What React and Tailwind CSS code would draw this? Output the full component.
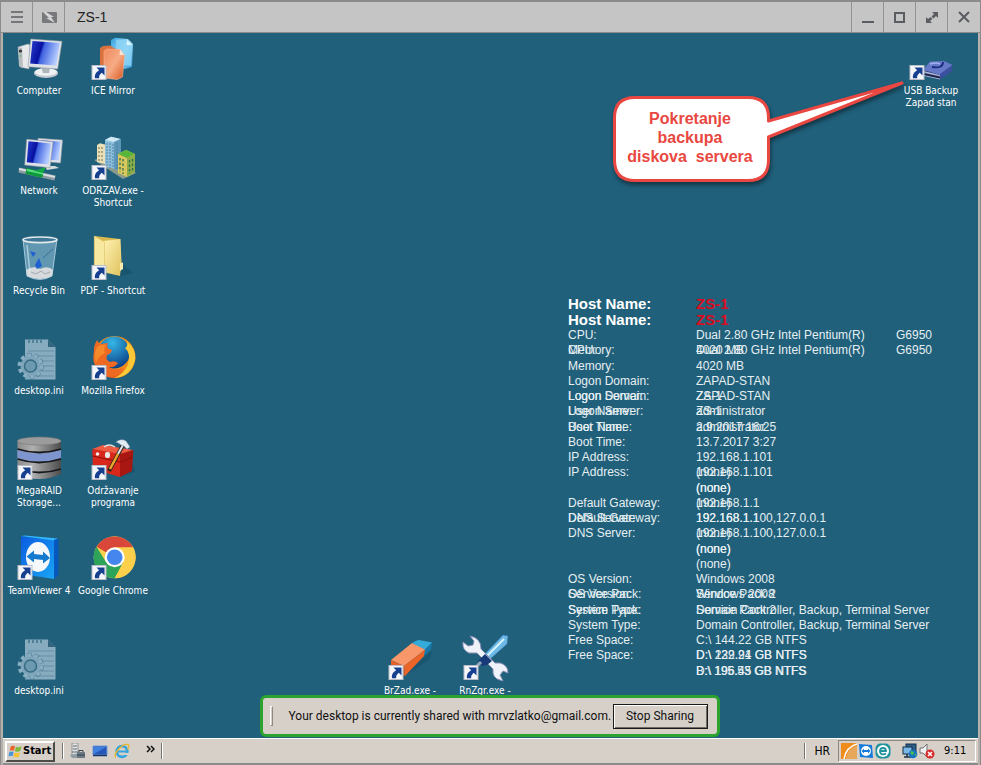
import React from "react";

const SANS = "font-['Liberation_Sans',Arial,sans-serif]";
const TAHOMA = "font-['DejaVu_Sans_Condensed','DejaVu_Sans',Tahoma,sans-serif]";

function Arrow() {
  return (
    <g>
      <rect x="3" y="29.500" width="14" height="14" fill="#f4f6fa" stroke="#b9bec8" strokeWidth="1" />
      <path d="M7.500 31.500 L15.500 31.500 L15.500 39.500 L12.800 36.800 C10.800 38.200 9.800 40 10.200 42.300 L6 42.300 C5.400 38.400 7.200 35.800 10.200 34.200 Z" fill="#173f8f" />
    </g>
  );
}

function Defs() {
  return (
    <svg className="absolute size-0" aria-hidden="true">
      <defs>
        <linearGradient id="screen" x1="0" y1="0" x2="1" y2="0.25">
          <stop offset="0" stopColor="#2a3fd0" />
          <stop offset="0.42" stopColor="#0610a0" />
          <stop offset="0.5" stopColor="#3f62e0" />
          <stop offset="1" stopColor="#b5ccff" />
        </linearGradient>
        <linearGradient id="metal" x1="0" y1="0" x2="1" y2="0">
          <stop offset="0" stopColor="#8b8b8b" />
          <stop offset="0.35" stopColor="#b0b0b0" />
          <stop offset="1" stopColor="#4c4c4c" />
        </linearGradient>
        <linearGradient id="orange" x1="0" y1="0" x2="1" y2="1">
          <stop offset="0" stopColor="#f08a5c" />
          <stop offset="0.5" stopColor="#f7ab85" />
          <stop offset="1" stopColor="#d9551d" />
        </linearGradient>
        <linearGradient id="sky" x1="0" y1="0" x2="1" y2="1">
          <stop offset="0" stopColor="#2f9fdc" />
          <stop offset="0.5" stopColor="#a8e0fa" />
          <stop offset="1" stopColor="#2a93d4" />
        </linearGradient>
        <linearGradient id="folder" x1="0" y1="0" x2="1" y2="1">
          <stop offset="0" stopColor="#fff3b4" />
          <stop offset="1" stopColor="#e0c25e" />
        </linearGradient>
        <linearGradient id="tv" x1="0" y1="0" x2="1" y2="1">
          <stop offset="0" stopColor="#0a5ce0" />
          <stop offset="1" stopColor="#19a5f5" />
        </linearGradient>
        <radialGradient id="fox" cx="0.5" cy="0.4" r="0.6">
          <stop offset="0.55" stopColor="#f9a01b" />
          <stop offset="1" stopColor="#e4541c" />
        </radialGradient>
        <radialGradient id="globe" cx="0.45" cy="0.2" r="0.8">
          <stop offset="0" stopColor="#35b6e6" />
          <stop offset="1" stopColor="#0b3f86" />
        </radialGradient>
      </defs>
    </svg>
  );
}

const art = {
  computer: (
    <g>
      <path d="M3 11 L13 8 L15 9 L14 33 L5 31 Z" fill="#e6e8ea" stroke="#9aa2a8" strokeWidth="0.500" />
      <path d="M3 11 L7 12 L8 32 L4 30 Z" fill="#b8bdc0" />
      <circle cx="5.500" cy="15" r="1.600" fill="#333" />
      <circle cx="5.500" cy="20" r="0.800" fill="#4fc04f" />
      <ellipse cx="31" cy="37" rx="12" ry="5" fill="#c4cbd0" />
      <ellipse cx="31" cy="36" rx="11" ry="3.800" fill="#eef1f3" />
      <path d="M26 31 L35 32 L34 37 L28 37 Z" fill="#aeb6bc" />
      <path d="M15.700 3 L47 5.300 L42.700 33 L13 30.700 Z" fill="#dfe3e8" stroke="#929aa5" strokeWidth="0.600" />
      <path d="M17.500 5 L44.800 7 L41.200 29.500 L15.200 27.500 Z" fill="url(#screen)" />
    </g>
  ),
  network: (
    <g>
      <path d="M23 2.300 L47.500 4 L45.500 27 L24 25 Z" fill="#dfe3e8" stroke="#929aa5" strokeWidth="0.600" />
      <path d="M25 4.300 L45.500 5.800 L43.800 24.500 L25 23 Z" fill="url(#screen)" />
      <path d="M30 30 h10 l4 2 l-12 2 z" fill="#d5dade" />
      <path d="M4 34 L40 42" stroke="#8f9ba3" strokeWidth="5" />
      <path d="M4 33 L40 41" stroke="#d7dde1" strokeWidth="2" />
      <path d="M11 35 L28 38.800" stroke="#0c9a3a" strokeWidth="6" />
      <path d="M12 34 L28 37.500" stroke="#5ee082" strokeWidth="2" />
      <path d="M19 35 L31 31 L28 37 Z" fill="#12a844" />
      <path d="M11.700 3.300 L38 5.700 L35 31.700 L9.700 29 Z" fill="#dfe3e8" stroke="#929aa5" strokeWidth="0.600" />
      <path d="M13.500 5.200 L36 7.400 L33.500 28.500 L11.800 26.200 Z" fill="url(#screen)" />
    </g>
  ),
  bin: (
    <g>
      <path d="M8 3 L12 40 Q25 47 37 40 L42 3 Z" fill="#8dbdd6" fillOpacity="0.600" stroke="#bcdceb" strokeWidth="0.800" />
      <path d="M11 34 Q18 29 25 33 Q33 29 38 34 L37 40 Q25 46 12 40 Z" fill="#d7dadd" />
      <path d="M16 36 l5 2 l5 -3 l4 3 l5 -2" stroke="#a4aab0" strokeWidth="1" fill="none" />
      <path d="M20 29 l4 -7 l3 8 l-5 3 z M15 15 l6 2 l-3 4 z" fill="#1f5fd0" />
      <path d="M28 22 L38 13" stroke="#356f96" strokeWidth="1" />
      <path d="M12 9 L15 37" stroke="#d6ecf6" strokeWidth="1.500" opacity="0.600" />
      <ellipse cx="25" cy="3.800" rx="17" ry="2.800" fill="#3d7795" stroke="#e2e8ec" strokeWidth="1.600" />
    </g>
  ),
  ini: (
    <g>
      <path d="M10 3.500 H33 L40.500 11 V43.500 H10 Z" fill="#87acc0" />
      <path d="M33 3.500 V11 H40.500 Z" fill="#31647d" />
      <path d="M14 4 v3 M18 4 v3 M22 4 v3 M26 4 v3" stroke="#31647d" strokeWidth="1.200" />
      <path d="M13 15 H39 M13 20 H39 M13 25 H39 M13 30 H39 M13 35 H39 M13 40 H39" stroke="#648fa6" strokeWidth="1" />
      <circle cx="15.500" cy="30" r="11" fill="none" stroke="#41738c" strokeWidth="4.500" strokeDasharray="4 2.910" />
      <circle cx="15.500" cy="30" r="10" fill="#7da4b9" />
      <circle cx="15.500" cy="30" r="11" fill="none" stroke="#8ab0c3" strokeWidth="3.500" strokeDasharray="3.600 3.310" />
      <circle cx="15.500" cy="30" r="6" fill="#6b99b0" stroke="#376b84" strokeWidth="1.500" />
    </g>
  ),
  raid: (
    <g>
      <path d="M2.500 5 V38 Q24 48 46 38 V5 Z" fill="url(#metal)" />
      <path d="M2.500 14 Q24 21 46 14 V22 Q24 29 2.500 22 Z" fill="#7e95cf" />
      <path d="M2.500 13 Q24 20 46 13 M2.500 23 Q24 30 46 23 M2.500 33 Q24 40 46 33" stroke="#16191d" strokeWidth="1.800" fill="none" />
      <ellipse cx="24.200" cy="5" rx="21.800" ry="4" fill="#9c9c9c" stroke="#767676" strokeWidth="0.600" />
      <Arrow />
    </g>
  ),
  teamviewer: (
    <g>
      <path d="M6 0 L39 4 L39 43 L6 38 Z" fill="url(#tv)" />
      <path d="M6 0 L10 -0.500 L43 2.500 L39 4.500 Z" fill="#31b7ff" />
      <path d="M39 4 L43.500 2.500 L43.500 39 L39 43 Z" fill="#0758bd" />
      <ellipse cx="23" cy="21" rx="12" ry="15" fill="#f5f8fb" />
      <path d="M11.500 20.500 L19 14.500 V18 L28 19 V15.500 L35 22 L28 27.500 V24 L19 23 V26.500 Z" fill="#137ad0" />
      <Arrow />
    </g>
  ),
  mirror: (
    <g>
      <path d="M22 4 L26 1.700 L39 3 L44 8 L43 31 L36 33 L22 28 Z" fill="url(#sky)" />
      <path d="M27 3.500 L38 4 L43 9 L42 30 L28 28 Z" fill="#8cd3f5" opacity="0.800" />
      <path d="M38 4 L37.500 9 L43 9 Z" fill="#e2f6ff" />
      <path d="M11 12 L14 10 L21 9.500 L30 15 L30 42 L11 40 Z" fill="#d9713f" />
      <path d="M15 15 L18 13 L31 13.500 L35.500 19 L33.500 41 L28 43.500 L15 42 Z" fill="url(#orange)" stroke="#f6b795" strokeWidth="0.600" />
      <path d="M31 13.500 L30.500 19 L35.500 19 Z" fill="#ffe3d3" />
      <Arrow />
    </g>
  ),
  buildings: (
    <g>
      <path d="M5 24 L18 20 L47 37 L34 43 Z" fill="#8b9a8d" />
      <path d="M8 9 L11 7.300 L16 8.500 V28 L8 26 Z" fill="#e9dfb8" />
      <path d="M10 11 V26 M13 11 V27" stroke="#8d815c" strokeWidth="1.200" strokeDasharray="2 2" />
      <path d="M16 4 L22 0.700 L31.500 3 V34 L16 31 Z" fill="#8dbfdc" />
      <path d="M16 4 L22 0.700 L31.500 3 L25 6 Z" fill="#cfe9f4" />
      <path d="M25 6 L31.500 3 V34 L25 33 Z" fill="#5e97ba" />
      <path d="M18 7 V31 M21 7 V32 M24 8 V32 M28 7 V33" stroke="#3e7699" strokeWidth="0.800" strokeDasharray="2 1" />
      <path d="M29 18 L37 14 L46 18 V36 L38 41 L29 37 Z" fill="#d8c75e" />
      <path d="M29 18 L37 14 L46 18 L38 22 Z" fill="#57b53a" />
      <path d="M38 22 L46 18 V36 L38 41 Z" fill="#8aac49" />
      <path d="M31 22 V36 M34 23 V38 M40.500 24 V38 M43.500 23 V36" stroke="#2f6e4d" strokeWidth="1.300" strokeDasharray="2.500 2" />
      <Arrow />
    </g>
  ),
  folder: (
    <g>
      <path d="M28 41 L44 37 L34 29 Z" fill="#154f68" opacity="0.600" />
      <path d="M5.300 0 L31 3 L32 30 L5.300 30 Z" fill="#d9b94f" />
      <path d="M14 5 L31.500 3 L32.500 26 L31 40 L14 36 Z" fill="url(#folder)" />
      <path d="M5.300 0 L15.500 6 L15.500 38 L5.300 31 Z" fill="#f8e9a0" stroke="#dcc166" strokeWidth="0.600" />
      <path d="M31 27 L34 26.500 L34 33 L31 35 Z" fill="#f7ecb1" />
      <Arrow />
    </g>
  ),
  firefox: (
    <g>
      <circle cx="25.500" cy="21" r="21" fill="url(#fox)" />
      <circle cx="25" cy="16.500" r="16" fill="url(#globe)" />
      <path d="M38 5 Q47 13 46.300 23 Q43 41 25 42 Q35 38 39 28 Q42 17 36 12 Q39 11 38 5 Z" fill="#fbc935" />
      <path d="M5 12 Q6 7 8 4 Q9 7 12 8 L19 7 Q17 11 20 13 L23 14 Q22 18 18 19 Q16 24 21 26 Q25 24 29 27 Q26 32 20 31 Q27 36 34 31 Q31 41 20 41 Q7 37 4.500 25 Z" fill="#ee6a23" />
      <path d="M8 11 Q12 8 17 9 Q14 13 16 17 Q9 20 7 27 Q4 19 8 11 Z" fill="#f58a2b" />
      <Arrow />
    </g>
  ),
  toolbox: (
    <g>
      <path d="M30 41 L46 36 L44 28 Z" fill="#154f68" opacity="0.600" />
      <path d="M3.300 13 L14 9 L44 14 L31 19 Z" fill="#ef5a43" />
      <path d="M3.300 13 L31 18 L31 41 L4 33 Z" fill="#d8281c" />
      <path d="M31 18 L44.300 14 L43 35 L31 41 Z" fill="#a91712" />
      <path d="M3.500 20 L31 26 L44 21" stroke="#8d0f0c" strokeWidth="1" fill="none" />
      <circle cx="8.500" cy="18" r="1.800" fill="#eee" />
      <path d="M15 11 Q20 7 26 11" stroke="#ddd" strokeWidth="1.500" fill="none" />
      <rect x="16" y="16" width="5" height="6" rx="2" fill="#e8e8e8" />
      <path d="M34 9 L20 35" stroke="#33271b" strokeWidth="4" />
      <path d="M29 18 L21 33" stroke="#efa52b" strokeWidth="2.500" />
      <path d="M34 9 L29 18" stroke="#dfe6ee" strokeWidth="2" />
      <path d="M27 6 Q32 2 37 5 L41 11 L38 13 L35 10 L32 9 Q30 7 27 6 Z" fill="#e4ecf3" stroke="#8999a8" strokeWidth="0.500" />
      <Arrow />
    </g>
  ),
  chrome: (
    <g>
      <circle cx="25.700" cy="21.300" r="21" fill="#fcd04b" />
      <path d="M25.700 21.300 L7.500 10.800 A21 21 0 0 1 44 11.300 Z" fill="#d8473a" />
      <path d="M7.500 10.800 A21 21 0 0 0 25.700 42.300 L34.500 26 L17 26 Z" fill="#2da45a" />
      <path d="M25.700 11.300 H44 A21 21 0 0 1 25.700 42.300 L34.400 26.300 Z" fill="#fcd04b" />
      <circle cx="25.700" cy="21.300" r="10" fill="#fff" />
      <circle cx="25.700" cy="21.300" r="7.800" fill="#4585ee" />
      <Arrow />
    </g>
  ),
  eraser: (
    <g>
      <path d="M15 42 L43 24 L46 15 L20 36 Z" fill="#154f68" opacity="0.600" />
      <path d="M5 24 L26 7 L40 13 L18 30 Z" fill="#f8986a" />
      <path d="M5 24 L18 30 L19 40 L5 33 Z" fill="#e4622a" />
      <path d="M18 30 L40 13 L38 20 L19 40 Z" fill="#ec6428" />
      <path d="M26 7 Q31 4 33 4 L46 6.500 L39 13.500 Z" fill="#34abd9" />
      <path d="M46 6.500 L45 13 L38 20 L39 13.500 Z" fill="#1679ad" />
      <Arrow />
    </g>
  ),
  tools: (
    <g>
      <path d="M42 -1 L47 0 L46 8 L27 25 L22 20 Z" fill="#6db9e6" stroke="#3576b0" strokeWidth="0.600" />
      <path d="M43 3 L25 21" stroke="#d6f2fc" strokeWidth="2" />
      <path d="M9 0 L13 5 L12 9 L7 10 L2 6 Q1 14 8 17 L16 17 L32 33 Q31 42 39 44 L42 45 L39 39 L42 35 L47 37 Q47 29 39 27 L34 27 L20 13 Q20 2 9 0 Z" fill="#f0f2fa" stroke="#8b91b5" strokeWidth="1" />
      <path d="M17 25 L24 18 L31 25 L26 29 L21 30 Z" fill="#173a78" />
      <path d="M20 26 L12 34" stroke="#98a8c0" strokeWidth="3" />
      <Arrow />
    </g>
  ),
  usb: (
    <g>
      <path d="M17 37 L33 42 L45 34 L44 32 L17 33 Z" fill="#1c2348" />
      <path d="M17 35 L33 39 L33 43.500 L17 40 Z" fill="#a9b2d8" />
      <path d="M17 38 L33 41.500" stroke="#1c2348" strokeWidth="1.800" />
      <path d="M16 34 L23 25.500 L37 25 L45.500 29 L33 39 Z" fill="#6579c8" />
      <path d="M33 38 L45.500 29 L45 35 L33 43.500 Z" fill="#3c4f9f" />
      <path d="M25 31 Q36 33 36 26" stroke="#1b2c80" strokeWidth="1.800" fill="none" />
      <path d="M23 28 Q29 26 33 28" stroke="#a3b2ee" strokeWidth="1.500" fill="none" />
      <Arrow />
    </g>
  ),
};

function DesktopIcon({ kind, lines, className = "" }) {
  return (
    <button type="button" className={`flex h-[100px] w-[72px] flex-col items-center text-[10px] leading-3 text-white ${TAHOMA} ${className}`}>
      <svg viewBox="0 0 48 48" className="mb-px size-12 shrink-0 overflow-visible" aria-hidden="true">
        {art[kind]}
      </svg>
      {lines.map((line) => (
        <span key={line} className="whitespace-nowrap">{line}</span>
      ))}
    </button>
  );
}

const leftIcons = [
  ["computer", ["Computer"]],
  ["mirror", ["ICE Mirror"]],
  ["network", ["Network"]],
  ["buildings", ["ODRZAV.exe -", "Shortcut"]],
  ["bin", ["Recycle Bin"]],
  ["folder", ["PDF - Shortcut"]],
  ["ini", ["desktop.ini"]],
  ["firefox", ["Mozilla Firefox"]],
  ["raid", ["MegaRAID", "Storage..."]],
  ["toolbox", ["Održavanje", "programa"]],
  ["teamviewer", ["TeamViewer 4"]],
  ["chrome", ["Google Chrome"]],
  ["ini", ["desktop.ini"]],
];

const CPU = "Dual 2.80 GHz Intel Pentium(R)";

// Two wallpaper passes overlap one row apart, so a cell can hold several texts.
const info = [
  [["CPU:"], [CPU]],
  [["CPU:", "Memory:"], [CPU, "4020 MB"]],
  [["Memory:"], ["4020 MB"]],
  [["Logon Domain:"], ["ZAPAD-STAN"]],
  [["Logon Domain:", "Logon Server:"], ["ZAPAD-STAN", "ZS-1"]],
  [["Logon Server:", "User Name:"], ["ZS-1", "administrator"]],
  [["User Name:", "Boot Time:"], ["administrator", "2.9.2017 16:25"]],
  [["Boot Time:"], ["13.7.2017 3:27"]],
  [["IP Address:"], ["192.168.1.101"]],
  [["IP Address:"], ["192.168.1.101", "(none)"]],
  [[], ["(none)", "(none)"]],
  [["Default Gateway:"], ["192.168.1.1", "(none)"]],
  [["Default Gateway:", "DNS Server:"], ["192.168.1.1", "192.168.1.100,127.0.0.1"]],
  [["DNS Server:"], ["192.168.1.100,127.0.0.1", "(none)"]],
  [[], ["(none)", "(none)"]],
  [[], ["(none)"]],
  [["OS Version:"], ["Windows 2008"]],
  [["OS Version:", "Service Pack:"], ["Windows 2008", "Service Pack 2"]],
  [["Service Pack:", "System Type:"], ["Service Pack 2", "Domain Controller, Backup, Terminal Server"]],
  [["System Type:"], ["Domain Controller, Backup, Terminal Server"]],
  [["Free Space:"], ["C:\\ 144.22 GB NTFS"]],
  [["Free Space:"], ["D:\\ 222.91 GB NTFS", "D:\\ 139.24 GB NTFS"]],
  [[], ["B:\\ 195.53 GB NTFS", "D:\\ 196.45 GB NTFS"]],
];

function Stack({ texts }) {
  return (
    <div className="grid">
      {texts.map((t, i) => (
        <span key={i} className="col-start-1 row-start-1 flex">
          {t === CPU ? (
            <>
              <span className="w-[200px]">{t}</span>
              <span>G6950</span>
            </>
          ) : (
            t
          )}
        </span>
      ))}
    </div>
  );
}

function HostInfo() {
  return (
    <table className={`absolute right-[26px] bottom-[59px] block w-[384px] whitespace-nowrap text-[#e6eff2] ${SANS}`}>
      <thead className="block text-[15px] leading-4 font-bold">
        {[0, 1].map((n) => (
          <tr key={n} className="grid grid-cols-[128px_1fr]">
            <th className="text-left text-white">Host Name:</th>
            <th className="text-left text-[#d90d20]">ZS-1</th>
          </tr>
        ))}
      </thead>
      <tbody className="grid h-[351px] auto-rows-fr text-xs leading-[15px]">
        {info.map(([labels, values], i) => (
          <tr key={i} className="grid grid-cols-[128px_1fr]">
            <td><Stack texts={labels} /></td>
            <td><Stack texts={values} /></td>
          </tr>
        ))}
      </tbody>
    </table>
  );
}

function Callout() {
  return (
    <div className={`absolute top-[45px] right-[70px] h-[108px] w-[296px] ${SANS}`}>
      <svg viewBox="0 0 296 108" className="absolute inset-0 size-full overflow-visible drop-shadow-[1px_3px_2px_rgba(0,0,0,0.45)]" aria-hidden="true">
        <path
          d="M23 19.500 H136 Q156.500 19.500 156.500 40 V43 L290 5 L156.500 59 V82 Q156.500 102.500 136 102.500 H23 Q2.500 102.500 2.500 82 V40 Q2.500 19.500 23 19.500 Z"
          fill="#fff"
          stroke="#e94741"
          strokeWidth="3"
          strokeLinejoin="round"
        />
      </svg>
      <p className="relative w-[156px] pt-[31px] text-center text-base leading-[19px] font-bold whitespace-pre text-[#e94741]">
        {"Pokretanje\nbackupa\ndiskova  servera"}
      </p>
    </div>
  );
}

function TitleButton({ label, side, children }) {
  return (
    <button
      type="button"
      aria-label={label}
      className={`flex w-8 items-center justify-center border-[#929292] text-[#595c60] ${side === "left" ? "border-r" : "border-l"}`}
    >
      <svg viewBox="0 0 16 16" className="size-4" fill="none" stroke="currentColor" strokeWidth="2" aria-hidden="true">
        {children}
      </svg>
    </button>
  );
}

function TitleBar() {
  return (
    <header className="flex h-[33px] shrink-0 border-t-2 border-b border-[#8b8b8b] bg-[#c5c5c5] pr-px">
      <TitleButton label="Menu" side="left">
        <path d="M2 3 H14 M2 8 H14 M2 13 H14" strokeWidth="1.500" />
      </TitleButton>
      <TitleButton label="Disconnect" side="left">
        <rect x="1" y="3" width="15" height="11" rx="1" fill="#77797c" stroke="none" />
        <path d="M2 3 L8 9 H5 L14 14 L10 8 H13 L5 3 Z" fill="#d5d5d5" stroke="none" />
      </TitleButton>
      <h1 className={`flex flex-1 items-center pl-3 text-sm text-[#222] ${SANS}`}>ZS-1</h1>
      <TitleButton label="Minimize">
        <path d="M2 13 H14" />
      </TitleButton>
      <TitleButton label="Maximize">
        <rect x="3" y="4" width="9" height="9" />
      </TitleButton>
      <TitleButton label="Full screen">
        <path d="M8 3 H14 V9 L12 7 L9.500 9.500 L7.500 7.500 L10 5 Z M2 8 L4 10 L6.500 8 L8.500 10 L6 12 L8 14 H2 Z" fill="currentColor" stroke="none" />
      </TitleButton>
      <TitleButton label="Close">
        <path d="M3 3 L13 13 M13 3 L3 13" />
      </TitleButton>
    </header>
  );
}

function Divider() {
  return <span className="h-4 w-[2px] border-r border-l border-r-white border-l-[#77736e]" />;
}

function LaunchButton({ label, children }) {
  return (
    <button type="button" aria-label={label} className="size-4">
      <svg viewBox="0 0 16 16" className="size-4" aria-hidden="true">{children}</svg>
    </button>
  );
}

function Taskbar() {
  return (
    <footer className={`flex h-[27px] shrink-0 items-center border-t border-b-2 border-t-white border-b-[#8b8b8b] bg-[#d6d0c9] pl-0.5 text-[11px] text-black ${TAHOMA}`}>
      <button type="button" className="flex h-[21px] w-[50px] items-center border-2 border-t-white border-r-[#4d4b48] border-b-[#4d4b48] border-l-white pl-px font-bold">
        <svg viewBox="0 0 16 16" className="size-[15px] shrink-0" aria-hidden="true">
          <path d="M3 2.500 Q5.500 1 7.500 2.500 L6.300 7.300 Q4.200 6 1.800 7.300 Z" fill="#e9642c" />
          <path d="M8.500 3 Q11 4.300 14.500 2.500 L13 7.500 Q10 9 7.300 7.700 Z" fill="#80b93b" />
          <path d="M1.500 8.500 Q4 7.300 6 8.500 L4.800 13 Q2.500 12 0.500 13.200 Z" fill="#4795d8" />
          <path d="M7 9 Q10 10.300 12.700 8.800 L11.500 13.500 Q8.500 15 5.800 13.500 Z" fill="#f4c32f" />
        </svg>
        Start
      </button>
      <nav className="flex flex-1 items-center gap-[6px] pl-[7px]">
        <Divider />
        <LaunchButton label="Server Manager">
          <path d="M2 0 H8 V13 H2 Z" fill="#e3e5e6" stroke="#7b8388" strokeWidth="0.800" />
          <path d="M3 3 H7 M3 6 H7 M2 9 H8" stroke="#5c666d" />
          <path d="M0 12 L9 10 L9 15 L2 15 Z" fill="#8d9ba3" />
          <rect x="7" y="9" width="8" height="6" fill="#6c7a84" />
          <path d="M9 9 V7.500 H13 V9 M7 12 H15" stroke="#39434a" fill="none" />
        </LaunchButton>
        <LaunchButton label="Show desktop">
          <path d="M1 3 H15 V12 H1 Z" fill="#2758b8" stroke="#6e9ad6" />
          <path d="M2 4 H14 L2 11 Z" fill="#3e7fe0" />
          <path d="M1 12.500 H15" stroke="#173468" strokeWidth="1.500" />
        </LaunchButton>
        <LaunchButton label="Internet Explorer">
          <circle cx="8" cy="8.500" r="5.300" fill="none" stroke="#35a5df" strokeWidth="2.800" />
          <path d="M4 8.500 H13" stroke="#35a5df" strokeWidth="2" />
          <path d="M10 10 H15 V12 H10 Z" fill="#d6d0c9" />
          <path d="M2 14.500 C-2 12 8 0 14 1.500 C16 2.500 14.500 5 13.500 6.500" fill="none" stroke="#ebb528" strokeWidth="1.300" />
        </LaunchButton>
        <button type="button" aria-label="More programs" className="pl-[10px]">
          <svg viewBox="0 0 9 8" className="mb-1 h-2 w-[9px]" fill="none" stroke="#111" strokeWidth="1.500" aria-hidden="true">
            <path d="M1 1 L4 4 L1 7 M5 1 L8 4 L5 7" />
          </svg>
        </button>
        <Divider />
      </nav>
      <Divider />
      <span className="px-2 text-xs">HR</span>
      <div className="mr-0.5 flex h-[22px] w-[138px] items-center gap-px border border-t-[#8b8782] border-r-white border-b-white border-l-[#8b8782] pl-[2px]">
        <svg viewBox="0 0 16 16" className="size-4" aria-hidden="true">
          <path d="M0 0 H16 V16 H0 Z" fill="#f08c1c" />
          <path d="M5 16 Q6 5 16 3 V16 Z" fill="#e6a75a" />
          <path d="M3 16 Q5 4 16 1" stroke="#fff" strokeWidth="1.500" fill="none" />
        </svg>
        <svg viewBox="0 0 16 16" className="size-4" aria-hidden="true">
          <path d="M1 1 L14 2 L15 15 L2 14 Z" fill="#147bdc" />
          <circle cx="8" cy="8" r="5" fill="#fff" />
          <path d="M3.500 8 L6 5.500 V7 H10 V5.500 L12.500 8 L10 10.500 V9 H6 V10.500 Z" fill="#147bdc" />
        </svg>
        <svg viewBox="0 0 16 16" className="size-4" aria-hidden="true">
          <rect x="0.500" y="0.500" width="15" height="15" rx="5" fill="#20939d" />
          <circle cx="8" cy="8" r="6" fill="#fff" />
          <path d="M5 8 H11 C11 4 5 4 5 8 C5 12 9 12 11 10.500" fill="none" stroke="#20939d" strokeWidth="1.800" />
        </svg>
        <svg viewBox="0 0 16 16" className="ml-[10px] size-4" aria-hidden="true">
          <rect x="4" y="1" width="10" height="8" fill="#2c5f8a" stroke="#172f46" />
          <rect x="1" y="4" width="9" height="7" fill="#79b8e6" stroke="#172f46" />
          <path d="M2 14 H9 M5 11 V14" stroke="#172f46" strokeWidth="1.500" />
          <circle cx="11" cy="11" r="4.300" fill="#1774c5" />
          <path d="M9 8 L12 9 L11 12 L8.500 11 Z M12.500 12 L14.500 10 L14 13 Z" fill="#4dc14b" />
        </svg>
        <svg viewBox="0 0 16 16" className="size-4" aria-hidden="true">
          <path d="M1 5 H4 L8 1 V14 L4 10 H1 Z" fill="#f1f1f1" stroke="#6d7073" />
          <circle cx="11" cy="11" r="4.500" fill="#d82a2a" />
          <path d="M9 9 L13 13 M13 9 L9 13" stroke="#fff" strokeWidth="1.500" />
        </svg>
        <time className="ml-2">9:11</time>
      </div>
    </footer>
  );
}

function ShareBar() {
  return (
    <div className="absolute inset-x-0 bottom-px flex justify-center pr-[2px]">
      <div className="flex h-[42px] w-[460px] items-center rounded-md border-3 border-[#2ba32e] bg-[#d6d0c9] pr-[9px] pl-[7px] font-['Roboto','Liberation_Sans',Arial,sans-serif] text-xs text-[#111]">
        <span className="h-5 w-[3px] border border-t-white border-r-[#8d8984] border-b-[#8d8984] border-l-white" />
        <p className="flex-1 pl-4 whitespace-nowrap">Your desktop is currently shared with mrvzlatko@gmail.com.</p>
        <button type="button" className="h-[25px] w-[95px] border border-[#1c1a19] shadow-[inset_1px_1px_0_#fff,inset_-1px_-1px_0_#6f6b67]">
          Stop Sharing
        </button>
      </div>
    </div>
  );
}

export default function App() {
  return (
    <div className="flex min-h-screen flex-col border-r border-l border-[#8b8b8b] bg-[#c5c5c5]">
      <Defs />
      <TitleBar />
      <div className="flex flex-1 flex-col border-r-2 border-l-2 border-[#b5b1ad]">
        <main className="relative flex-1 overflow-hidden bg-[#20607b]">
          <div className="grid w-fit grid-cols-2 gap-x-[2px] pt-[3px]">
            {leftIcons.map(([kind, lines], i) => (
              <DesktopIcon key={i} kind={kind} lines={lines} />
            ))}
          </div>
          <DesktopIcon kind="usb" lines={["USB Backup", "Zapad stan"]} className="absolute top-[3px] right-[11px]" />
          <DesktopIcon kind="eraser" lines={["BrZad.exe -"]} className="absolute top-[603px] left-[371px]" />
          <DesktopIcon kind="tools" lines={["RnZgr.exe -"]} className="absolute top-[603px] left-[446px]" />
          <HostInfo />
          <Callout />
          <ShareBar />
        </main>
        <Taskbar />
      </div>
    </div>
  );
}
